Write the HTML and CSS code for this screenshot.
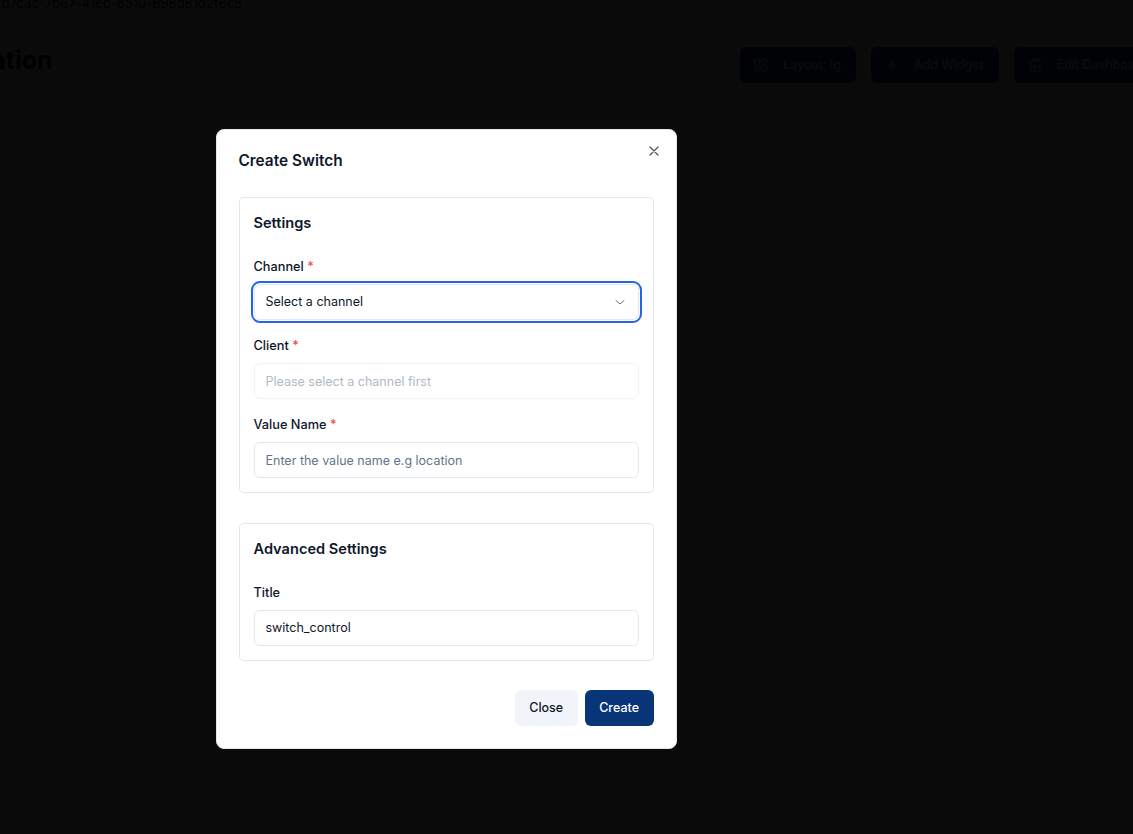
FILE: index.html
```html
<!DOCTYPE html>
<html lang="en">
<head>
    <meta charset="UTF-8">
    <meta name="viewport" content="width=device-width, initial-scale=1.0">
    <title>Create Switch</title>
    <link rel="stylesheet" href="styles.css">
</head>

<body>
    <div class="page">
        <p class="page-id">dashboard/4d7c3c-7b67-41eb-8510-B98d81d2f6c8</p>
        <div class="page-header">
            <h1>Automation</h1>
            <div class="page-actions">
                <button class="page-btn">
                    <svg width="14" height="14" viewBox="0 0 14 14" fill="none" stroke="currentColor" stroke-width="1.1"><rect x="1" y="1" width="5" height="6" rx="1"/><rect x="8" y="1" width="5" height="4" rx="1"/><rect x="1" y="9" width="5" height="4" rx="1"/><rect x="8" y="7" width="5" height="6" rx="1"/></svg>
                    Layout: lg
                </button>
                <button class="page-btn">
                    <svg width="14" height="14" viewBox="0 0 14 14" fill="none" stroke="currentColor" stroke-width="1.1"><path d="M7 2.500v9M2.500 7h9"/></svg>
                    Add Widget
                </button>
                <button class="page-btn">
                    <svg width="14" height="14" viewBox="0 0 14 14" fill="none" stroke="currentColor" stroke-width="1.1"><rect x="5" y="0.500" width="4" height="2.500" rx=".6"/><path d="M9 2h1.500A1.500 1.500 0 0 1 12 3.500V12a1.500 1.500 0 0 1-1.500 1.500H6M5 2H3.500A1.500 1.500 0 0 0 2 3.500V8M2 13.500l.5-2.500L7 6.500l2 2L4.500 13z"/></svg>
                    Edit Dashboard
                </button>
            </div>
        </div>
    </div>

    <div class="overlay">
        <div class="modal">
            <div class="modal-header">
                <h2>Create Switch</h2>
                <button class="modal-close" aria-label="Close">
                    <svg width="16" height="16" viewBox="0 0 16 16" fill="none" stroke="#4b5563" stroke-width="1.200" stroke-linecap="round"><path d="M4 4l8 8M12 4l-8 8"/></svg>
                </button>
            </div>

            <section class="card">
                <h3>Settings</h3>
                <div class="form-group">
                    <label>Channel <span class="required">*</span></label>
                    <div class="field field-select">
                        <span>Select a channel</span>
                        <svg width="12" height="12" viewBox="0 0 12 12" fill="none" stroke="#64748b" stroke-width="1" stroke-linecap="round" stroke-linejoin="round"><path d="M2 4.500l4 3.500 4-3.500"/></svg>
                    </div>
                </div>
                <div class="form-group">
                    <label>Client <span class="required">*</span></label>
                    <input class="field" type="text" placeholder="Please select a channel first" disabled>
                </div>
                <div class="form-group">
                    <label>Value Name <span class="required">*</span></label>
                    <input class="field" type="text" placeholder="Enter the value name e.g location">
                </div>
            </section>

            <section class="card">
                <h3>Advanced Settings</h3>
                <div class="form-group">
                    <label>Title</label>
                    <input class="field field-filled" type="text" value="switch_control">
                </div>
            </section>

            <div class="modal-footer">
                <button class="btn btn-light">Close</button>
                <button class="btn btn-primary">Create</button>
            </div>
        </div>
    </div>
</body>
</html>
```

FILE: styles.css
```css
html, body {
    margin: 0;
    height: 100%;
    overflow: hidden;
}

body {
    font-family: 'Inter', sans-serif;
    background-color: #ffffff;
    color: #0f172a;
}

.page {
    width: 1245px;
    margin-left: -83px;
}

.page-id {
    margin: -7px 0 0 6px;
    font-size: 13px;
    line-height: 20px;
    color: #0f172a;
}

.page-header {
    display: flex;
    align-items: center;
    justify-content: space-between;
    margin-top: 29px;
}

.page-header h1 {
    margin: 0 0 10px -7px;
    font-size: 25px;
    font-weight: 700;
    line-height: 36px;
}

.page-actions {
    display: flex;
    gap: 15px;
}

.page-btn {
    display: flex;
    align-items: center;
    gap: 15px;
    height: 36px;
    padding: 0 15px 1px 14px;
    border: none;
    border-radius: 6px;
    background-color: #083577;
    color: #ffffff;
    font-family: 'Inter', sans-serif;
    font-size: 12.4px;
    font-weight: 500;
}

.overlay {
    position: fixed;
    inset: 0;
    background-color: rgba(0, 0, 0, 0.96);
}

.modal {
    position: absolute;
    left: 215.5px;
    top: 129px;
    width: 461px;
    height: 620px;
    box-sizing: border-box;
    padding: 22px;
    background-color: #ffffff;
    border: 1px solid #e2e8f0;
    border-radius: 8px;
}

.modal-header {
    display: flex;
    justify-content: space-between;
    height: 45px;
}

.modal-header h2 {
    margin: 0;
    font-size: 15.4px;
    font-weight: 600;
    line-height: 18px;
}

.modal-close {
    position: absolute;
    top: 13px;
    right: 14px;
    display: flex;
    padding: 0;
    border: none;
    background: none;
}

.card {
    padding: 15px 14px 14px;
    margin-bottom: 30px;
    border: 1px solid #e2e8f0;
    border-radius: 4px;
}

.card:last-of-type {
    margin-bottom: 29px;
}

.card h3 {
    margin: 0 0 26px;
    font-size: 14.6px;
    font-weight: 600;
    line-height: 20px;
}

.form-group {
    display: flex;
    flex-direction: column;
    margin-bottom: 18px;
}

.form-group:last-child {
    margin-bottom: 0;
}

label {
    margin-bottom: 9px;
    font-size: 12.75px;
    font-weight: 500;
    line-height: 16px;
}

.required {
    color: #ef4444;
}

.field {
    display: flex;
    align-items: center;
    justify-content: space-between;
    width: 100%;
    height: 36px;
    box-sizing: border-box;
    padding: 0 11px;
    border: 1px solid #e2e8f0;
    border-radius: 6px;
    background-color: #ffffff;
    color: #0f172a;
    font-family: 'Inter', sans-serif;
    font-size: 12.5px;
}

.field::placeholder {
    color: #64748b;
    opacity: 1;
}

.field:disabled {
    opacity: 0.5;
}

.field-filled {
    padding-bottom: 2px;
}

.field-select {
    outline: 2px solid #2563eb;
    outline-offset: 1px;
}

.field-select span {
    margin-bottom: 2px;
}

.field-select svg {
    margin-right: 1px;
}

.modal-footer {
    display: flex;
    justify-content: flex-end;
    gap: 7px;
}

.btn {
    height: 36px;
    padding: 0 14.500px 1px;
    border: none;
    border-radius: 6px;
    font-family: 'Inter', sans-serif;
    font-size: 12.5px;
    font-weight: 500;
}

.btn-light {
    background-color: #f1f5f9;
    color: #0f172a;
}

.btn-primary {
    background-color: #083577;
    color: #ffffff;
}
```
